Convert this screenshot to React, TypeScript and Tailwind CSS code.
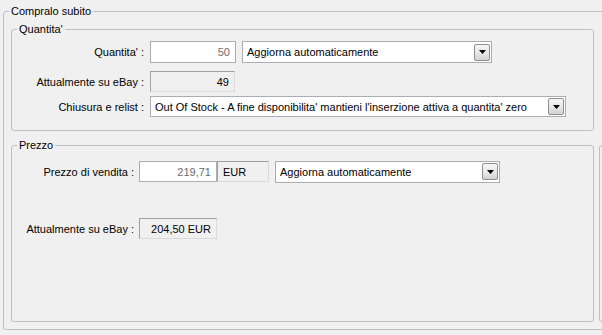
import React from 'react';

const FONT = "font-['Liberation_Sans',Arial,sans-serif]";

const ArrowButton: React.FC = () => (
  <div className="ml-auto mr-[1px] flex h-[17px] w-[16px] shrink-0 items-center justify-center rounded-[2px] border border-[#8e8f8f] bg-gradient-to-b from-[#f6f6f6] via-[#e9e9e9] to-[#d2d2d2]">
    <svg width="7" height="4" viewBox="0 0 7 4">
      <polygon points="0,0 7,0 3.5,4" fill="#000" />
    </svg>
  </div>
);

const Combo: React.FC<{ text: string; className: string }> = ({ text, className }) => (
  <div className={`flex items-center border border-[#abadb3] bg-white pl-[4px] ${className}`}>
    <span className="whitespace-nowrap text-black">{text}</span>
    <ArrowButton />
  </div>
);

const Input: React.FC<{ value: string; className: string }> = ({ value, className }) => (
  <div className={`flex items-center justify-end border border-[#abadb3] bg-white pr-[5px] text-[#6d6d6d] ${className}`}>
    {value}
  </div>
);

const Static: React.FC<{ value: string; className: string; left?: boolean }> = ({ value, className, left }) => (
  <div
    className={`flex items-center border border-t-[#a0a0a0] border-l-[#a0a0a0] border-r-[#dadada] border-b-[#dadada] bg-[#f0f0f0] text-black ${
      left ? 'justify-start pl-[5px]' : 'justify-end pr-[5px]'
    } ${className}`}
  >
    {value}
  </div>
);

export default function App() {
  return (
    <div className={`h-[335px] w-[602px] overflow-hidden bg-[#f0f0f0] text-[11px] leading-[14px] text-black ${FONT}`}>
      {/* Compralo subito */}
      <fieldset className="ml-[3px] mt-[4px] h-[326px] w-[640px] rounded-[3px] border border-[#c0c0c0] pl-[5px] pt-[4px]">
        <legend className="px-[2px]">Compralo subito</legend>

        {/* Quantita' */}
        <fieldset className="ml-[2px] h-[109px] w-[583px] rounded-[3px] border border-[#c0c0c0] pl-[5px]">
          <legend className="px-[2px]">Quantita'</legend>

          <div className="mt-[5px] flex h-[22px] items-center">
            <div className="w-[127px] text-right">Quantita' :</div>
            <Input value="50" className="ml-[6px] h-[22px] w-[86px]" />
            <Combo text="Aggiorna automaticamente" className="ml-[6px] h-[22px] w-[250px]" />
          </div>

          <div className="mt-[8px] flex h-[21px] items-center">
            <div className="w-[127px] text-right">Attualmente su eBay :</div>
            <Static value="49" className="ml-[6px] h-[21px] w-[85px]" />
          </div>

          <div className="mt-[4px] flex h-[21px] items-center">
            <div className="w-[127px] text-right">Chiusura e relist :</div>
            <Combo
              text="Out Of Stock - A fine disponibilita' mantieni l'inserzione attiva a quantita' zero"
              className="ml-[6px] h-[21px] w-[416px]"
            />
          </div>
        </fieldset>

        <div className="mt-[7px] flex gap-[5px]">
          {/* Prezzo */}
          <fieldset className="ml-[2px] h-[184px] w-[583px] shrink-0 rounded-[3px] border border-[#c0c0c0] pl-[5px]">
            <legend className="px-[2px]">Prezzo</legend>

            <div className="mt-[9px] flex h-[21px] items-center">
              <div className="w-[117px] text-right">Prezzo di vendita :</div>
              <Input value="219,71" className="ml-[5px] h-[21px] w-[78px]" />
              <Static value="EUR" left className="h-[21px] w-[52px]" />
              <Combo text="Aggiorna automaticamente" className="ml-[6px] h-[22px] w-[225px]" />
            </div>

            <div className="mt-[36px] flex h-[21px] items-center">
              <div className="w-[117px] text-right">Attualmente su eBay :</div>
              <Static value="204,50 EUR" className="ml-[5px] h-[21px] w-[78px]" />
            </div>
          </fieldset>

          {/* next group, cut off at the window edge */}
          <div className="mt-[7px] h-[177px] w-[60px] shrink-0 rounded-[3px] border border-[#c0c0c0]" />
        </div>
      </fieldset>
    </div>
  );
}
